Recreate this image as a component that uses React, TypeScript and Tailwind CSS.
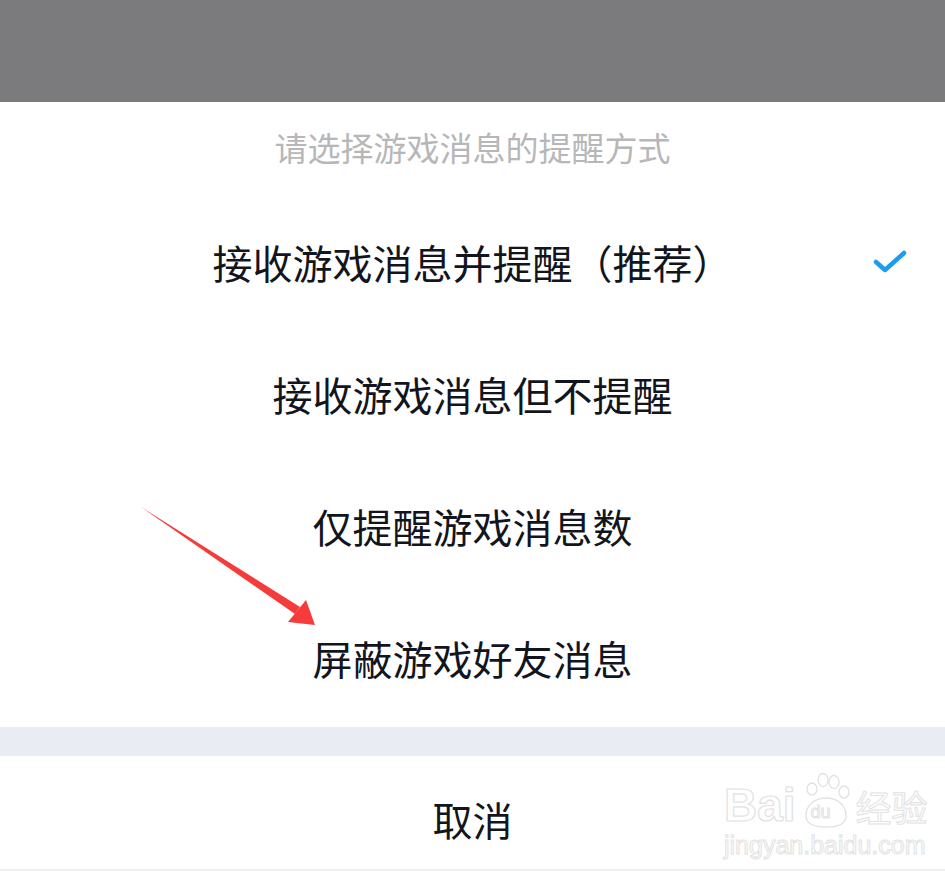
import React from 'react';

const options = [
  { label: '接收游戏消息并提醒（推荐）', checked: true },
  { label: '接收游戏消息但不提醒', checked: false },
  { label: '仅提醒游戏消息数', checked: false },
  { label: '屏蔽游戏好友消息', checked: false },
];

const CheckIcon = () => (
  <svg width="34" height="26" viewBox="0 0 34 26" fill="none">
    <path d="M3 13 L12 21 L31 4" stroke="#1b9cf2" strokeWidth="4.5" strokeLinecap="round" strokeLinejoin="round" />
  </svg>
);

const App: React.FC = () => {
  return (
    <div
      className="relative w-[945px] h-[873px] overflow-hidden bg-white"
      style={{ fontFamily: '"Noto Sans CJK SC", "Noto Sans", sans-serif' }}
    >
      {/* Dimmed backdrop */}
      <div className="h-[102px] bg-[#7b7b7d]" />

      {/* Sheet */}
      <div className="flex flex-col bg-white">
        <div className="h-[97px] flex items-center justify-center">
          <span className="-mt-[6px] text-[33px] leading-none text-[#b7b7b9]">请选择游戏消息的提醒方式</span>
        </div>

        {options.map((opt) => (
          <div key={opt.label} className="relative h-[132px] flex items-center justify-center">
            <span className="-mt-[6px] text-[40px] leading-none text-[#12151d]">{opt.label}</span>
            {opt.checked && (
              <div className="absolute right-[38px] top-1/2 -translate-y-1/2 -mt-[3px]">
                <CheckIcon />
              </div>
            )}
          </div>
        ))}

        <div className="h-[29px] bg-[#e9ecf3]" />

        <div className="h-[115px] pt-[19px] flex items-center justify-center border-b-2 border-[#efefef]">
          <span className="-mt-[6px] text-[40px] leading-none text-[#12151d]">取消</span>
        </div>
      </div>

      {/* Red annotation arrow */}
      <svg className="absolute left-0 top-0 pointer-events-none" width="945" height="873">
        <polygon points="141,507 300,607 295,614" fill="#f53b3b" />
        <polygon points="288,622 315,625 306,600" fill="#f53b3b" />
      </svg>

      {/* Watermark */}
      <div className="absolute left-[724px] top-[772px] flex flex-col items-start pointer-events-none select-none">
        <div className="flex items-end">
          <span
            className="text-[46px] leading-none font-bold text-transparent [-webkit-text-stroke:1.2px_#e2e2e2]"
            style={{ fontFamily: '"Liberation Sans", sans-serif' }}
          >
            Bai
          </span>
          <div className="relative w-[56px] h-[56px] mx-[2px]">
            <svg width="56" height="56" viewBox="0 0 56 56" fill="none" stroke="#e2e2e2" strokeWidth="1.3">
              <ellipse cx="14" cy="17" rx="5" ry="6" />
              <ellipse cx="25" cy="8" rx="5" ry="6.5" />
              <ellipse cx="36" cy="10" rx="5" ry="6.5" />
              <ellipse cx="46" cy="20" rx="5" ry="6" />
              <path d="M8 44 C8 32 18 26 28 26 C38 26 48 32 48 44 C48 52 40 55 28 55 C16 55 8 52 8 44 Z" />
            </svg>
            <span
              className="absolute left-[13px] top-[31px] text-[18px] leading-none text-transparent [-webkit-text-stroke:1px_#e2e2e2]"
              style={{ fontFamily: '"Liberation Sans", sans-serif' }}
            >
              du
            </span>
          </div>
          <span className="text-[36px] leading-none text-transparent [-webkit-text-stroke:1px_#e2e2e2] mb-[4px]">经验</span>
        </div>
        <span
          className="mt-[5px] text-[25px] leading-none text-transparent [-webkit-text-stroke:1px_#e2e2e2]"
          style={{ fontFamily: '"Liberation Sans", sans-serif' }}
        >
          jingyan.baidu.com
        </span>
      </div>
    </div>
  );
};

export default App;
